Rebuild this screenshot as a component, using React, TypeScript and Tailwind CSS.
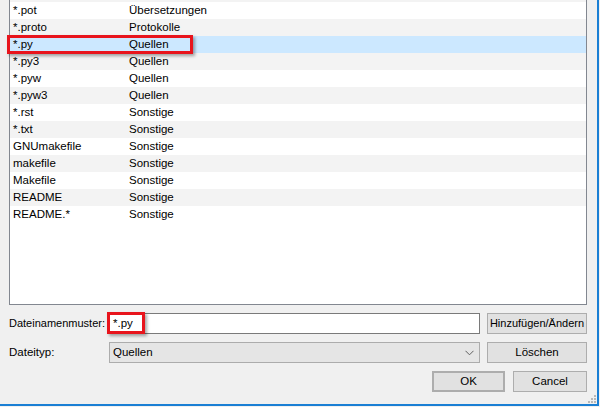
import React from "react";

const rows: { pattern: string; type: string; selected?: boolean }[] = [
  { pattern: "*.po", type: "Übersetzungen" },
  { pattern: "*.pot", type: "Übersetzungen" },
  { pattern: "*.proto", type: "Protokolle" },
  { pattern: "*.py", type: "Quellen", selected: true },
  { pattern: "*.py3", type: "Quellen" },
  { pattern: "*.pyw", type: "Quellen" },
  { pattern: "*.pyw3", type: "Quellen" },
  { pattern: "*.rst", type: "Sonstige" },
  { pattern: "*.txt", type: "Sonstige" },
  { pattern: "GNUmakefile", type: "Sonstige" },
  { pattern: "makefile", type: "Sonstige" },
  { pattern: "Makefile", type: "Sonstige" },
  { pattern: "README", type: "Sonstige" },
  { pattern: "README.*", type: "Sonstige" },
];

const font = { fontFamily: '"Liberation Sans", Arial, sans-serif' };

const WinButton = ({ label, className = "" }: { label: string; className?: string }) => (
  <div
    className={`h-[21px] flex items-center justify-center whitespace-nowrap bg-[#e1e1e1] border border-[#adadad] text-black ${className}`}
  >
    {label}
  </div>
);

export default function App() {
  return (
    <div className="w-[600px] h-[407px] bg-[#f0f0f0] overflow-hidden relative" style={font}>
      <div className="w-[599px] h-[406px] border-r-2 border-b-2 border-[#1a7fd4] pl-[9px] pr-[10px]">
        {/* Pattern list */}
        <div className="h-[305px] border-x border-b border-[#828790] bg-white overflow-hidden">
          <div className="-mt-[15px]">
            {rows.map((r, i) => (
              <div
                key={r.pattern}
                className={`h-[17px] flex items-center pl-[3px] text-[11.5px] text-black whitespace-nowrap ${
                  r.selected ? "bg-[#cce8ff]" : i % 2 === 0 ? "bg-[#f3f3f3]" : "bg-white"
                }`}
              >
                <span className="w-[116px] shrink-0">{r.pattern}</span>
                <span>{r.type}</span>
              </div>
            ))}
          </div>
        </div>

        {/* Pattern input row */}
        <div className="mt-[8px] flex items-center text-[11.5px] text-black">
          <span className="w-[100px] shrink-0 whitespace-nowrap text-[11px]">Dateinamenmuster:</span>
          <div className="w-[371px] h-[21px] bg-white border border-[#7a7a7a] flex items-center pl-[3px]">
            *.py
          </div>
          <WinButton label="Hinzufügen/Ändern" className="ml-[7px] flex-1 text-[11px]" />
        </div>

        {/* File type row */}
        <div className="mt-[8px] flex items-center text-[11.5px] text-black">
          <span className="w-[100px] shrink-0">Dateityp:</span>
          <div className="w-[371px] h-[21px] bg-[#e5e5e5] border border-[#acacac] flex items-center pl-[3px] pr-[5px]">
            <span className="flex-1">Quellen</span>
            <svg width="9" height="6" viewBox="0 0 9 6">
              <path d="M0.5 0.8 L4.5 4.8 L8.5 0.8" fill="none" stroke="#606060" strokeWidth="1" />
            </svg>
          </div>
          <WinButton label="Löschen" className="ml-[7px] flex-1 text-[11.5px]" />
        </div>

        {/* Dialog buttons */}
        <div className="mt-[8px] flex justify-end gap-[8px] text-[11.5px]">
          <WinButton label="OK" className="w-[73px] border-2 border-[#0078d7]" />
          <WinButton label="Cancel" className="w-[74px]" />
        </div>
      </div>

      {/* Annotation boxes */}
      <div className="absolute left-[7px] top-[35px] w-[186px] h-[19px] border-[3px] border-[#e8141c] shadow-[2px_2px_3px_rgba(0,0,0,0.35)]" />
      <div className="absolute left-[107px] top-[312px] w-[38px] h-[22px] border-[3px] border-[#e8141c] shadow-[2px_2px_3px_rgba(0,0,0,0.35)]" />

      {/* Size grip */}
      <svg className="absolute left-[588px] top-[395px]" width="8" height="8" viewBox="0 0 8 8">
        <rect x="6" y="0" width="2" height="2" fill="#b8b8b8" />
        <rect x="3" y="3" width="2" height="2" fill="#b8b8b8" />
        <rect x="6" y="3" width="2" height="2" fill="#b8b8b8" />
        <rect x="0" y="6" width="2" height="2" fill="#b8b8b8" />
        <rect x="3" y="6" width="2" height="2" fill="#b8b8b8" />
        <rect x="6" y="6" width="2" height="2" fill="#b8b8b8" />
      </svg>
    </div>
  );
}
